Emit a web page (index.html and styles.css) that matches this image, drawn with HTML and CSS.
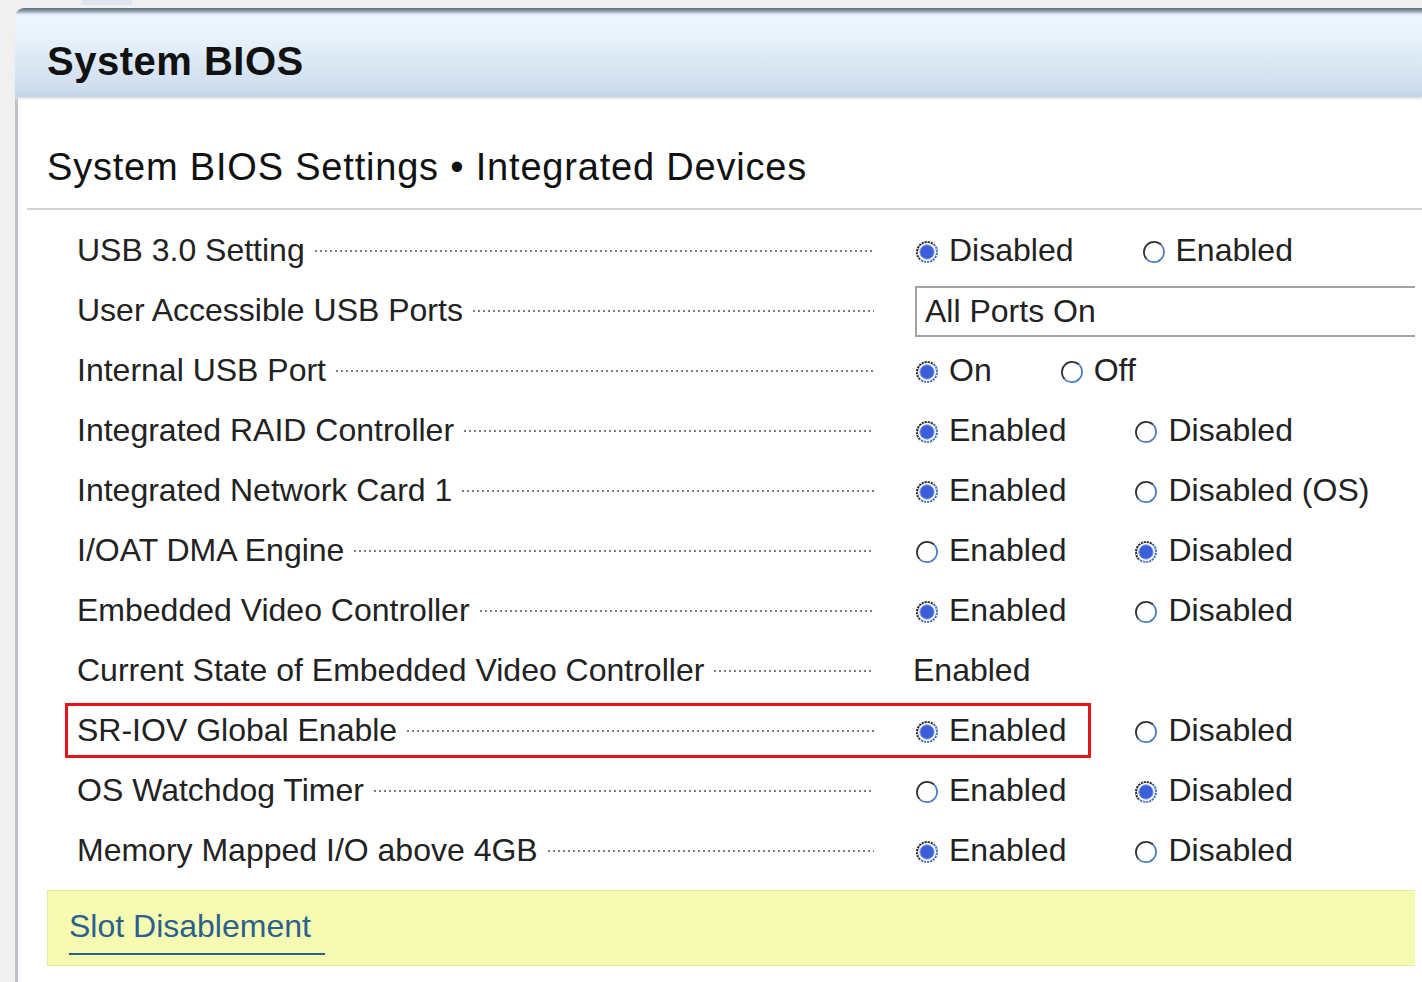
FILE: index.html
```html
<!DOCTYPE html>
<html lang="en">
<head>
<meta charset="utf-8">
<title>System BIOS</title>
<link rel="stylesheet" href="styles.css">
</head>
<body>
<svg width="0" height="0" class="defs" aria-hidden="true">
  <defs>
    <symbol id="radio-off" viewBox="0 0 24 24">
      <circle cx="12" cy="12" r="10.3" fill="#fff"/>
      <path d="M4.72 19.28 A10.3 10.3 0 0 1 19.28 4.72" fill="none" stroke="#2e2e2e" stroke-width="1.7"/>
      <path d="M19.28 4.72 A10.3 10.3 0 0 1 4.72 19.28" fill="none" stroke="#4a7cc4" stroke-width="1.7"/>
    </symbol>
    <symbol id="radio-on" viewBox="0 0 24 24">
      <circle cx="12" cy="12" r="10.3" fill="#fff"/>
      <path d="M4.72 19.28 A10.3 10.3 0 0 1 19.28 4.72" fill="none" stroke="#262626" stroke-width="1.9"/>
      <path d="M19.28 4.72 A10.3 10.3 0 0 1 4.72 19.28" fill="none" stroke="#3f6fb8" stroke-width="1.9"/>
      <circle cx="12" cy="12" r="10.3" fill="none" stroke="#fff" stroke-width="2" stroke-dasharray="1 2.2"/>
      <circle cx="12" cy="12" r="7.2" fill="#3b5fd9" stroke="#8fa3e6" stroke-width="1"/>
    </symbol>
  </defs>
</svg>

<div class="top-strip"><span class="tab"></span></div>

<div class="window">
  <header class="title-bar">
    <h1 class="title">System BIOS</h1>
  </header>

  <main class="content">
    <h2 class="subtitle">System BIOS Settings • Integrated Devices</h2>
    <div class="rule"></div>

    <div class="rows">
      <div class="row">
        <div class="label"><span class="label-text">USB 3.0 Setting</span><span class="leader"></span></div>
        <div class="value">
          <span class="opt"><svg class="radio"><use href="#radio-on"/></svg>Disabled</span>
          <span class="opt"><svg class="radio"><use href="#radio-off"/></svg>Enabled</span>
        </div>
      </div>

      <div class="row">
        <div class="label"><span class="label-text">User Accessible USB Ports</span><span class="leader"></span></div>
        <div class="value">
          <div class="select">All Ports On</div>
        </div>
      </div>

      <div class="row">
        <div class="label"><span class="label-text">Internal USB Port</span><span class="leader"></span></div>
        <div class="value">
          <span class="opt"><svg class="radio"><use href="#radio-on"/></svg>On</span>
          <span class="opt"><svg class="radio"><use href="#radio-off"/></svg>Off</span>
        </div>
      </div>

      <div class="row">
        <div class="label"><span class="label-text">Integrated RAID Controller</span><span class="leader"></span></div>
        <div class="value">
          <span class="opt"><svg class="radio"><use href="#radio-on"/></svg>Enabled</span>
          <span class="opt"><svg class="radio"><use href="#radio-off"/></svg>Disabled</span>
        </div>
      </div>

      <div class="row">
        <div class="label"><span class="label-text">Integrated Network Card 1</span><span class="leader"></span></div>
        <div class="value">
          <span class="opt"><svg class="radio"><use href="#radio-on"/></svg>Enabled</span>
          <span class="opt"><svg class="radio"><use href="#radio-off"/></svg>Disabled (OS)</span>
        </div>
      </div>

      <div class="row">
        <div class="label"><span class="label-text">I/OAT DMA Engine</span><span class="leader"></span></div>
        <div class="value">
          <span class="opt"><svg class="radio"><use href="#radio-off"/></svg>Enabled</span>
          <span class="opt"><svg class="radio"><use href="#radio-on"/></svg>Disabled</span>
        </div>
      </div>

      <div class="row">
        <div class="label"><span class="label-text">Embedded Video Controller</span><span class="leader"></span></div>
        <div class="value">
          <span class="opt"><svg class="radio"><use href="#radio-on"/></svg>Enabled</span>
          <span class="opt"><svg class="radio"><use href="#radio-off"/></svg>Disabled</span>
        </div>
      </div>

      <div class="row">
        <div class="label"><span class="label-text">Current State of Embedded Video Controller</span><span class="leader"></span></div>
        <div class="value">
          <span class="plain">Enabled</span>
        </div>
      </div>

      <div class="row row-highlight">
        <div class="label"><span class="label-text">SR-IOV Global Enable</span><span class="leader"></span></div>
        <div class="value">
          <span class="opt"><svg class="radio"><use href="#radio-on"/></svg>Enabled</span>
          <span class="opt"><svg class="radio"><use href="#radio-off"/></svg>Disabled</span>
        </div>
        <span class="highlight-box"></span>
      </div>

      <div class="row">
        <div class="label"><span class="label-text">OS Watchdog Timer</span><span class="leader"></span></div>
        <div class="value">
          <span class="opt"><svg class="radio"><use href="#radio-off"/></svg>Enabled</span>
          <span class="opt"><svg class="radio"><use href="#radio-on"/></svg>Disabled</span>
        </div>
      </div>

      <div class="row">
        <div class="label"><span class="label-text">Memory Mapped I/O above 4GB</span><span class="leader"></span></div>
        <div class="value">
          <span class="opt"><svg class="radio"><use href="#radio-on"/></svg>Enabled</span>
          <span class="opt"><svg class="radio"><use href="#radio-off"/></svg>Disabled</span>
        </div>
      </div>
    </div>

    <div class="link-box">
      <a class="link">Slot Disablement</a>
    </div>
  </main>
</div>
</body>
</html>
```

FILE: styles.css
```css
* {
  box-sizing: border-box;
}

html, body {
  margin: 0;
  padding: 0;
  height: 100%;
  overflow: hidden;
}

body {
  background: #f0f0f0;
  font-family: "Liberation Sans", Arial, sans-serif;
  color: #1f1f1f;
}

.defs {
  position: absolute;
  width: 0;
  height: 0;
}

.top-strip {
  height: 8px;
  display: flex;
}

.tab {
  display: block;
  margin-left: 82px;
  width: 50px;
  height: 5px;
  background: #dfe5ec;
}

.window {
  margin-left: 15px;
  display: flex;
  flex-direction: column;
  height: calc(100% - 8px);
}

.title-bar {
  height: 89px;
  border-top-left-radius: 9px;
  background: linear-gradient(to bottom,
    #5d6e7b 0px,
    #8f9ca7 3px,
    #dbe6f0 6px,
    #eef6fd 8px,
    #e8f2fb 28px,
    #dae8f4 55px,
    #cfdeee 80px,
    #c3d4e8 89px);
  box-shadow: 0 2px 2px #e2e2e2;
  padding: 29px 0 0 32px;
  position: relative;
  z-index: 1;
}

.title {
  margin: 0;
  font-size: 40px;
  line-height: 48px;
  font-weight: bold;
  letter-spacing: 0.5px;
  color: #111;
}

.content {
  flex: 1;
  background: #fff;
  border-left: 3px solid #bcc2c8;
}

.subtitle {
  margin: 47px 0 0 29px;
  font-size: 38px;
  line-height: 46px;
  font-weight: normal;
  letter-spacing: 0.8px;
  color: #111;
}

.rule {
  margin: 18px 0 0 9px;
  height: 2px;
  background: #d2d2d2;
}

.rows {
  margin: 10px 0 0 47px;
}

.row {
  position: relative;
  display: flex;
  align-items: center;
  height: 60px;
  padding-left: 12px;
  font-size: 32px;
  line-height: 60px;
  color: #222;
}

.label {
  flex: none;
  width: 797px;
  display: flex;
  align-items: center;
}

.label-text {
  white-space: nowrap;
}

.leader {
  flex: 1;
  height: 2px;
  margin-left: 10px;
  margin-top: 2px;
  background-image: linear-gradient(to right, #7d7d7d 2px, transparent 2px);
  background-size: 5px 2px;
  background-repeat: repeat-x;
}

.value {
  margin-left: 41px;
  display: flex;
  align-items: center;
  flex: 1;
  min-width: 0;
  height: 100%;
}

.opt {
  display: flex;
  align-items: center;
  margin-right: 68px;
  white-space: nowrap;
}

.radio {
  width: 24px;
  height: 24px;
  margin: 4px 10px 0 0;
  flex: none;
}

.plain {
  margin-left: -2px;
}

.select {
  flex: none;
  width: 500px;
  height: 51px;
  margin-top: 2px;
  border: 2px solid #a2a2a2;
  border-right: none;
  padding-left: 8px;
  line-height: 47px;
}

.highlight-box {
  position: absolute;
  left: 0;
  top: 3px;
  width: 1026px;
  height: 55px;
  border: 3px solid #e5141b;
  pointer-events: none;
}

.link-box {
  margin: 10px 0 0 29px;
  width: 1368px;
  height: 76px;
  background: #f5fcb2;
  border: 1px solid #e4eea0;
  border-right: none;
  padding: 17px 0 0 21px;
}

.link {
  display: inline-block;
  font-size: 32px;
  line-height: 36px;
  color: #2c5f90;
  padding: 0 14px 9px 0;
  border-bottom: 2px solid #2c5f90;
  text-decoration: none;
}
```
